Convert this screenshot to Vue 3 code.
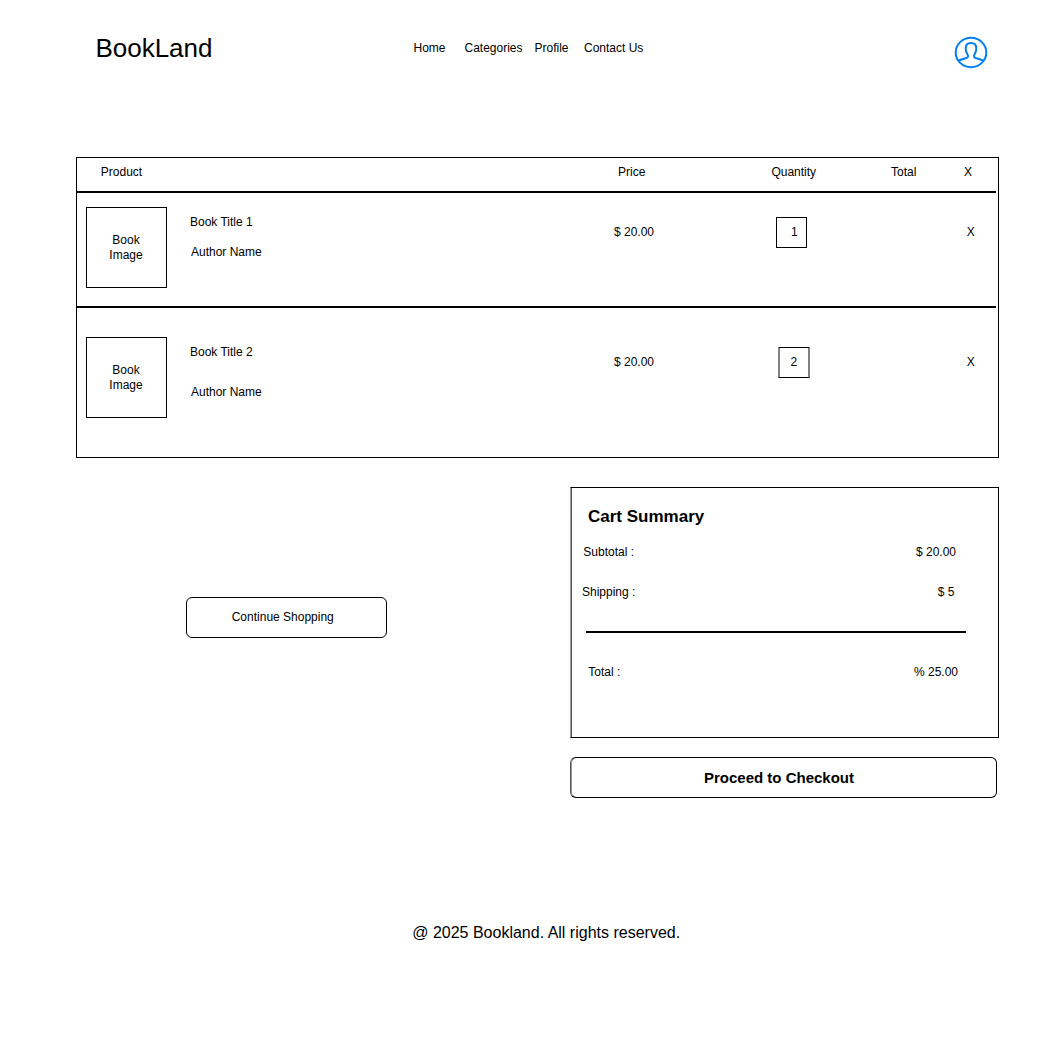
<script setup>
const links = ['Home', 'Categories', 'Profile', 'Contact Us']
const items = [
  { id: 1, title: 'Book Title 1', author: 'Author Name', price: '$ 20.00', quantity: 1 },
  { id: 2, title: 'Book Title 2', author: 'Author Name', price: '$ 20.00', quantity: 2 },
]
</script>

<template>
  <div class="page">
    <header class="top">
      <div class="logo">BookLand</div>
      <nav class="nav">
        <a v-for="link in links" :key="link">{{ link }}</a>
      </nav>
      <svg class="user" width="34" height="34" viewBox="0 0 34 34" fill="none" stroke="#0080f0" stroke-width="2">
        <ellipse cx="17" cy="16.5" rx="15.3" ry="14.7" />
        <path d="M4.2 25C6 23.6 8.8 23 11.6 22.3C14.2 21.6 14.5 20.2 13.6 18.7C12.4 16.9 11.7 15.2 11.7 12.2C11.7 9.1 13.6 6.9 17 6.9S22.3 9.1 22.3 12.2C22.3 15.2 21.6 16.9 20.4 18.7C19.5 20.2 19.8 21.6 22.4 22.3C25.2 23 28 23.6 29.8 25" />
      </svg>
    </header>

    <section class="cart">
      <div class="row head">
        <span class="h-product">Product</span>
        <span>Price</span>
        <span>Quantity</span>
        <span>Total</span>
        <span>X</span>
      </div>
      <div v-for="item in items" :key="item.id" class="row item" :class="'item-' + item.id">
        <div class="cover">Book<br />Image</div>
        <div class="info">
          <div class="title">{{ item.title }}</div>
          <div class="author">{{ item.author }}</div>
        </div>
        <div class="price">{{ item.price }}</div>
        <div class="qty"><div class="box">{{ item.quantity }}</div></div>
        <div class="remove">X</div>
      </div>
    </section>

    <div class="bottom">
      <button class="btn continue">Continue Shopping</button>
      <div class="side">
        <section class="summary">
          <h2>Cart Summary</h2>
          <div class="line subtotal"><span>Subtotal :</span><span>$ 20.00</span></div>
          <div class="line shipping"><span>Shipping :</span><span>$ 5</span></div>
          <div class="rule"></div>
          <div class="line total"><span>Total :</span><span>% 25.00</span></div>
        </section>
        <button class="btn checkout">Proceed to Checkout</button>
      </div>
    </div>

    <footer class="foot">@ 2025 Bookland. All rights reserved.</footer>
  </div>
</template>

<style>
body {
  margin: 0;
  background: #fff;
}
</style>

<style scoped>
.page {
  box-sizing: border-box;
  width: 1045px;
  height: 1048px;
  overflow: hidden;
  background: #fff;
  color: #000;
  font: 12px/15px "Liberation Sans", Arial, sans-serif;
  white-space: nowrap;
}
.page * {
  box-sizing: border-box;
}
.top {
  display: flex;
  align-items: flex-start;
  height: 157px;
  padding-left: 95.4px;
}
.logo {
  width: 318.1px;
  margin-top: 33px;
  font-size: 26px;
  line-height: 31px;
}
.nav {
  display: flex;
  width: 540.5px;
  margin-top: 41px;
}
.nav a:nth-child(1) { width: 51px; }
.nav a:nth-child(2) { width: 70px; }
.nav a:nth-child(3) { width: 49.5px; }
.user {
  margin-top: 36px;
}
.cart {
  width: 923px;
  height: 301px;
  margin-left: 76px;
  border: 1px solid #000;
}
.row {
  display: grid;
  width: 919px;
}
.head {
  grid-template-columns: 541px 153.4px 119.6px 73px 1fr;
  height: 35px;
  padding-top: 7px;
  border-bottom: 2px solid #000;
}
.h-product { padding-left: 23.8px; }
.item {
  grid-template-columns: 104px 424px 162px 190.8px 1fr;
  align-items: start;
  padding-left: 9px;
}
.item-1 {
  height: 115px;
  padding-top: 14px;
  border-bottom: 2px solid #000;
}
.item-2 {
  height: 149px;
  padding-top: 29px;
}
.cover {
  width: 81px;
  height: 81px;
  padding: 25px 1px 0 0;
  border: 1px solid #000;
  text-align: center;
}
.title { padding-top: 8px; }
.author {
  padding-left: 1px;
  margin-top: 15px;
}
.item-2 .author { margin-top: 25px; }
.price { padding-top: 18px; }
.qty { padding-top: 10px; }
.box {
  width: 31px;
  height: 31px;
  padding: 7px 0 0 14px;
  border: 1px solid #000;
}
.item-2 .box {
  width: 32px;
  margin-left: 2px;
  padding-left: 10.4px;
  border-right: 2px solid #808080;
  border-left: 2px solid #808080;
}
.remove { padding-top: 18px; }
.bottom {
  display: flex;
  align-items: flex-start;
  height: 465px;
  padding: 29px 0 0 186px;
}
.btn {
  display: block;
  height: 41px;
  padding: 0;
  border: 1px solid #000;
  border-radius: 6px;
  background: #fff;
  color: #000;
  font: inherit;
  text-align: left;
}
.continue {
  width: 201px;
  margin-top: 110px;
  padding-left: 44.7px;
  padding-bottom: 1px;
}
.side { margin-left: 183px; }
.summary {
  width: 429px;
  height: 251px;
  border: 1px solid #000;
  border-left-color: #999;
  box-shadow: inset 1px 0 #555;
}
h2 {
  margin: 0;
  padding: 19px 0 0 17px;
  font-size: 17px;
  line-height: 20px;
}
.line {
  display: flex;
  justify-content: space-between;
}
.subtotal { padding: 18px 42px 0 12.3px; }
.shipping { padding: 25px 43.5px 0 11px; }
.rule {
  width: 380px;
  height: 2px;
  margin: 31px 0 0 15px;
  background: #000;
}
.total { padding: 32px 40px 0 17.3px; }
.checkout {
  width: 427px;
  margin-top: 19px;
  padding-left: 133px;
  border-left-color: #555;
  box-shadow: inset 1px 0 #999;
  font-size: 15px;
  font-weight: bold;
}
.foot {
  padding-left: 412.2px;
  font-size: 16px;
  line-height: 19px;
}
</style>
